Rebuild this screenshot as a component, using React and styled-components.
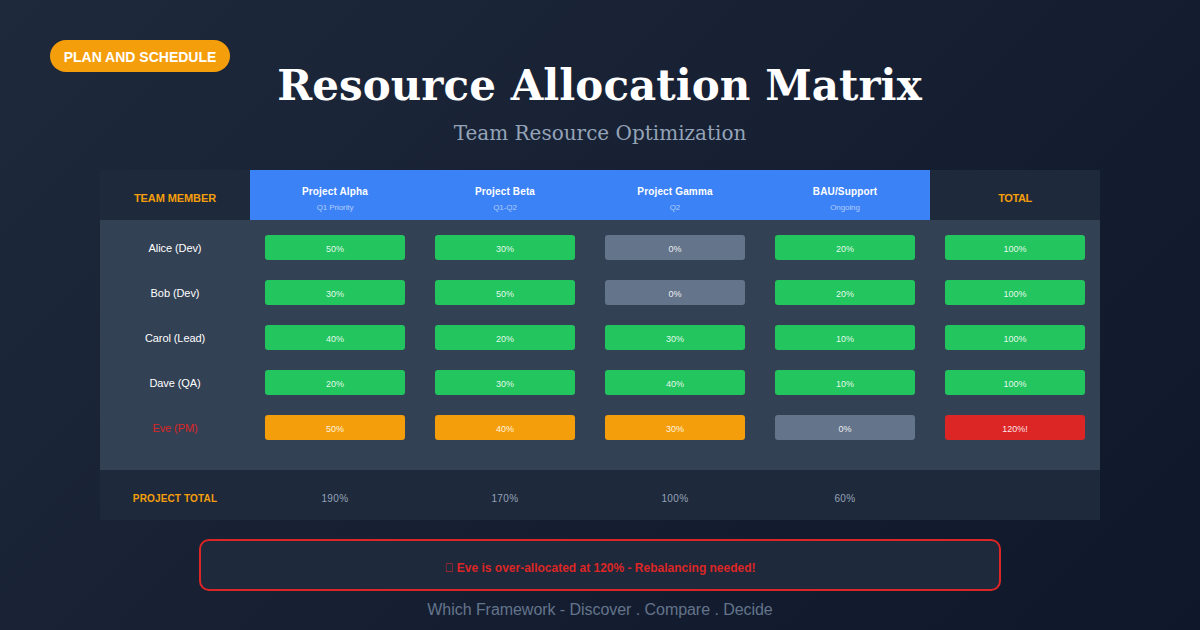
import React from "react";
import styled, { createGlobalStyle } from "styled-components";

const Global = createGlobalStyle`
  html, body { margin: 0; padding: 0; background: #0f172a; }
  * { box-sizing: border-box; }
`;
const Page = styled.div`
  position: relative; width: 1200px; height: 630px; overflow: hidden;
  background: linear-gradient(135deg, #1e293b 0%, #0f172a 100%);
  font-family: Arial, "Liberation Sans", sans-serif;
  display: flex; flex-direction: column; align-items: center;
`;
const Badge = styled.div`
  position: absolute; left: 50px; top: 40px; width: 180px; height: 32px;
  border-radius: 16px; background: #f59e0b; color: #fff;
  font-size: 14px; font-weight: 700; display: flex; align-items: center; justify-content: center; padding-top: 2px;
`;
const Title = styled.h1`
  margin: 58px 0 0; height: 56px; line-height: 56px; letter-spacing: 0.06px; padding-right: 1px;
  font-family: Georgia, "DejaVu Serif", serif; font-size: 42px; font-weight: 700; color: #fff;
`;
const Subtitle = styled.div`
  margin-top: 5px; height: 28px; line-height: 28px;
  font-family: Georgia, "DejaVu Serif", serif; font-size: 20px; color: #94a3b8;
`;
const Matrix = styled.div`
  margin-top: 23px; width: 1000px; display: flex; flex-direction: column;
`;
const Grid = styled.div`
  display: grid; grid-template-columns: 150px repeat(5, 170px);
`;
const HeadRow = styled(Grid)`height: 50px;`;
const HeadLabel = styled.div`
  background: #1e293b; color: #f59e0b; font-size: 11px; font-weight: 700;
  letter-spacing: ${p => p.$spacing};
  display: flex; align-items: center; justify-content: center; padding-top: 6px;
`;
const ProjectHead = styled.div`
  background: #3b82f6; display: flex; flex-direction: column; align-items: center;
  padding-top: 16px;
`;
const ProjectName = styled.div`
  color: #fff; font-size: 10px; font-weight: 700; line-height: 12px; letter-spacing: 0.15px;
`;
const ProjectSub = styled.div`
  margin-top: 5px; color: rgba(255,255,255,0.6); font-size: 8px; line-height: 10px; letter-spacing: -0.1px;
`;
const Body = styled.div`
  background: #334155; padding: 15px 0 30px; display: flex; flex-direction: column; gap: 20px;
`;
const Row = styled(Grid)`height: 25px; align-items: center;`;
const Name = styled.div`
  text-align: center; font-size: 11px; line-height: 25px; height: 25px; padding-top: 1px; letter-spacing: -0.08px;
  color: ${p => (p.$over ? "#dc2626" : "#fff")};
`;
const Bar = styled.div`
  justify-self: center; width: 140px; height: 25px; border-radius: 3px;
  background: ${p => p.$bg}; color: rgba(255,255,255,0.9); font-size: 9px;
  display: flex; align-items: center; justify-content: center; padding-top: 3px;
`;
const FootRow = styled(Grid)`height: 50px; background: #1e293b; align-items: center;`;
const FootLabel = styled.div`
  text-align: center; color: #f59e0b; font-size: 10px; font-weight: 700; padding-top: 7px; letter-spacing: 0.15px;
`;
const FootValue = styled.div`
  text-align: center; color: #94a3b8; font-size: 10px; padding-top: 7px; letter-spacing: 0.4px;
`;
const Alert = styled.div`
  margin-top: 19px; width: 802px; height: 52px; border: 2px solid #dc2626; border-radius: 10px;
  background: #1e293b; color: #dc2626; font-size: 12px; font-weight: 700;
  display: flex; align-items: center; justify-content: center; padding-top: 5px; white-space: pre;
`;
const Footer = styled.div`
  margin-top: 9px; color: #64748b; font-size: 16px; line-height: 20px; letter-spacing: -0.05px;
`;

const G = "#22c55e", O = "#f59e0b", S = "#64748b", R = "#dc2626";
const projects = [["Project Alpha", "Q1 Priority"], ["Project Beta", "Q1-Q2"], ["Project Gamma", "Q2"], ["BAU/Support", "Ongoing"]];
const rows = [
  ["Alice (Dev)", [["50%", G], ["30%", G], ["0%", S], ["20%", G], ["100%", G]]],
  ["Bob (Dev)", [["30%", G], ["50%", G], ["0%", S], ["20%", G], ["100%", G]]],
  ["Carol (Lead)", [["40%", G], ["20%", G], ["30%", G], ["10%", G], ["100%", G]]],
  ["Dave (QA)", [["20%", G], ["30%", G], ["40%", G], ["10%", G], ["100%", G]]],
  ["Eve (PM)", [["50%", O], ["40%", O], ["30%", O], ["0%", S], ["120%!", R]], true],
];

export default function App() {
  return (
    <Page>
      <Global />
      <Badge>PLAN AND SCHEDULE</Badge>
      <Title>Resource Allocation Matrix</Title>
      <Subtitle>Team Resource Optimization</Subtitle>
      <Matrix>
        <HeadRow>
          <HeadLabel $spacing="-0.08px">TEAM MEMBER</HeadLabel>
          {projects.map(([n, s]) => (
            <ProjectHead key={n}><ProjectName>{n}</ProjectName><ProjectSub>{s}</ProjectSub></ProjectHead>
          ))}
          <HeadLabel $spacing="-0.4px">TOTAL</HeadLabel>
        </HeadRow>
        <Body>
          {rows.map(([name, cells, over]) => (
            <Row key={name}>
              <Name $over={over}>{name}</Name>
              {cells.map(([v, c], i) => <Bar key={i} $bg={c}>{v}</Bar>)}
            </Row>
          ))}
        </Body>
        <FootRow>
          <FootLabel>PROJECT TOTAL</FootLabel>
          {["190%", "170%", "100%", "60%"].map(v => <FootValue key={v}>{v}</FootValue>)}
          <FootValue />
        </FootRow>
      </Matrix>
      <Alert>{"\uE000"} Eve is over-allocated at 120% - Rebalancing needed!</Alert>
      <Footer>Which Framework - Discover . Compare . Decide</Footer>
    </Page>
  );
}
